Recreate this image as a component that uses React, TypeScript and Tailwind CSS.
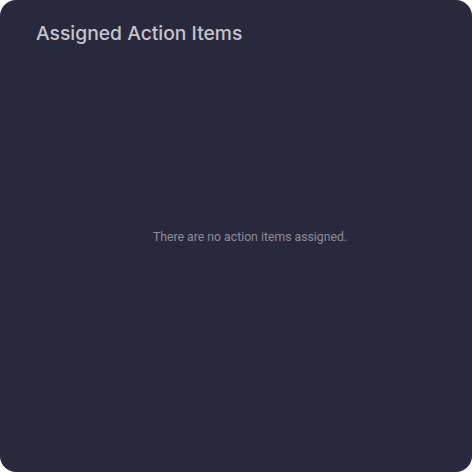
import React from 'react';

const App: React.FC = () => {
  return (
    <div className="w-[472px] h-[472px] bg-white">
      <section className="h-full rounded-2xl bg-[#28293d] flex flex-col px-9 pt-[20px] pb-9">
        <h2 className="text-[19.3px] leading-[26px] font-medium text-[#c4c4cc] font-['Inter',sans-serif]">
          Assigned Action Items
        </h2>
        <div className="flex-1 flex items-center justify-center pl-[28px] pb-[8px]">
          <p className="text-[12.25px] text-[#8b8c99] font-['Roboto',sans-serif]">
            There are no action items assigned.
          </p>
        </div>
      </section>
    </div>
  );
};

export default App;
